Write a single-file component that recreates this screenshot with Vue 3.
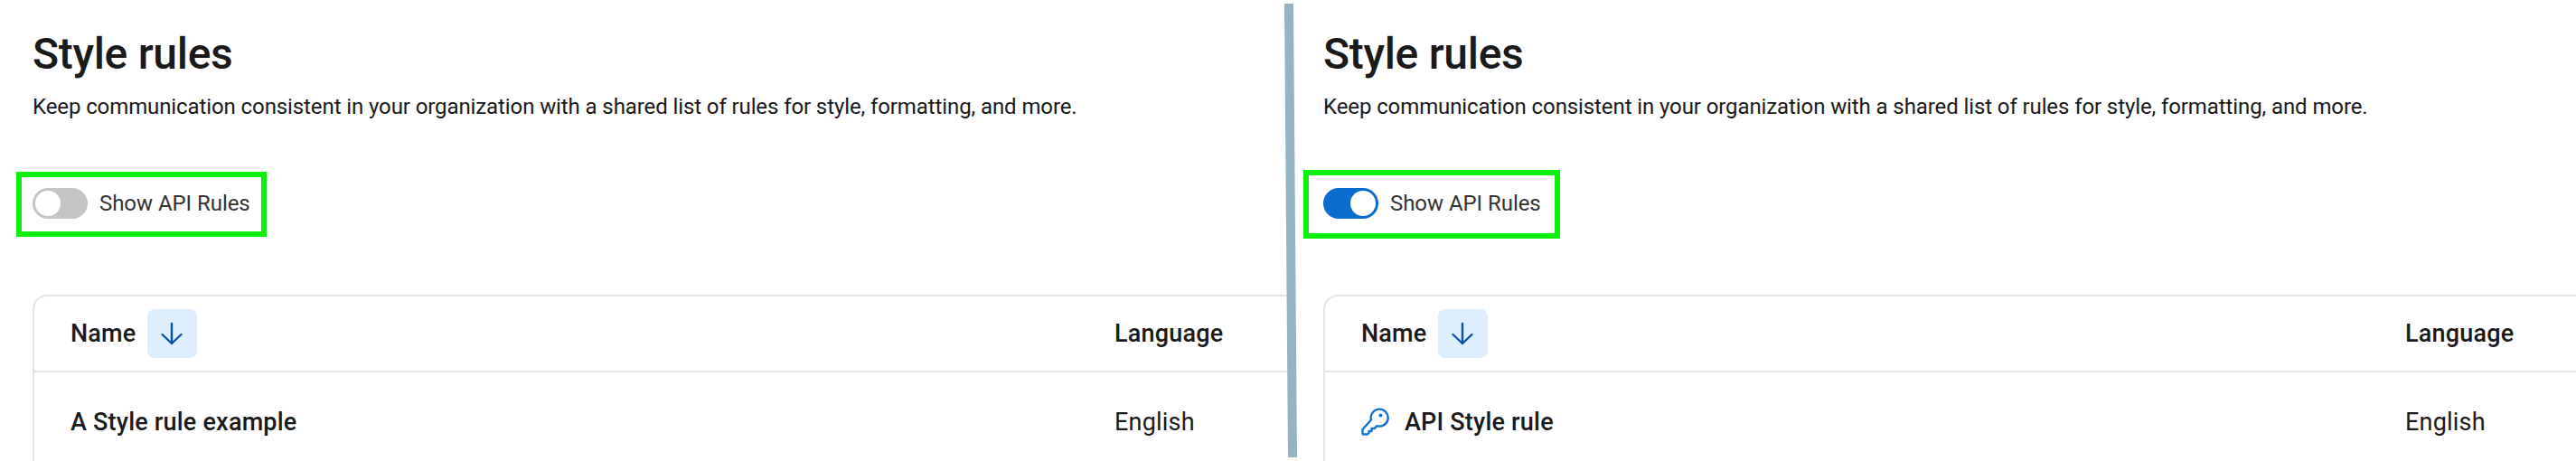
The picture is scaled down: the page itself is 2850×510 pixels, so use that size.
<script setup>
import { ref } from 'vue'

const panels = ref([
  { id: 'off', on: false, rowName: 'A Style rule example', api: false },
  { id: 'on', on: true, rowName: 'API Style rule', api: true }
])
</script>

<template>
  <div class="page">
    <section v-for="panel in panels" :key="panel.id" :class="['panel', 'panel-' + panel.id]">
      <h1 class="title">Style rules</h1>
      <p class="subtitle">Keep communication consistent in your organization with a shared list of rules for style, formatting, and more.</p>

      <div class="toggle-row">
        <button :class="['switch', { on: panel.on }]" @click="panel.on = !panel.on">
          <span class="thumb"></span>
        </button>
        <span class="toggle-label">Show API Rules</span>
        <span class="highlight"></span>
      </div>

      <div class="card">
        <div class="row head">
          <div class="cell name-cell">
            <span>Name</span>
            <span class="sort">
              <svg width="32" height="32" viewBox="0 0 32 32" fill="none" stroke="#0b4fa8" stroke-width="2.4" stroke-linecap="round" stroke-linejoin="round">
                <path d="M16 5v22" />
                <path d="M5.5 17 16 27 26.5 17" />
              </svg>
            </span>
          </div>
          <div class="cell">Language</div>
        </div>
        <div class="row body">
          <div class="cell name-cell">
            <svg v-if="panel.api" class="key" width="32" height="32" viewBox="0 0 32 32" fill="none" stroke="#1274d2" stroke-width="2.4" stroke-linejoin="round">
              <path d="M11 13.5A9.5 9.5 0 1 1 17.5 20.2L14.5 23H11.5V26H8.5V28L6.5 29.5H2.5A1 1 0 0 1 1.5 28.5V24Z" />
              <circle cx="21.5" cy="8.5" r="2" fill="#1274d2" stroke="none" />
            </svg>
            <span>{{ panel.rowName }}</span>
          </div>
          <div class="cell lang">English</div>
        </div>
      </div>
    </section>

    <svg class="divider" width="20" height="510" viewBox="0 0 20 510">
      <polygon points="1,4 11,4 15,506 5,506" fill="#95b3c3" />
    </svg>
  </div>
</template>

<style>
html, body {
  margin: 0;
  background: #fff;
  overflow: hidden;
}
</style>

<style scoped>
.page {
  position: relative;
  display: flex;
  width: 2850px;
  height: 510px;
  overflow: hidden;
  background: #fff;
  font-family: Roboto, "Liberation Sans", sans-serif;
  color: #1a1a1a;
}

.panel {
  box-sizing: border-box;
  height: 510px;
  padding: 30px 0 0 36px;
  overflow: hidden;
}

.panel-off {
  width: 1424px;
}

.panel-on {
  flex: 1;
  margin-left: 4px;
}

.title {
  margin: 0;
  font-size: 48px;
  line-height: 60px;
  font-weight: 500;
  letter-spacing: -0.3px;
}

.subtitle {
  margin: 12px 0 0;
  font-size: 24px;
  line-height: 32px;
  letter-spacing: -0.1px;
  white-space: nowrap;
}

.toggle-row {
  position: relative;
  display: flex;
  align-items: center;
  gap: 13px;
  width: max-content;
  margin-top: 74px;
}

.switch {
  position: relative;
  width: 61px;
  height: 34px;
  padding: 0;
  border: none;
  border-radius: 17px;
  background: #c4c4c4;
}

.switch.on {
  background: #0a6ccc;
}

.thumb {
  position: absolute;
  top: 3px;
  left: 3px;
  width: 28px;
  height: 28px;
  border-radius: 50%;
  background: #fff;
}

.switch.on .thumb {
  left: 30px;
}

.toggle-label {
  font-size: 24px;
  line-height: 34px;
  letter-spacing: -0.05px;
  color: #333;
}

.highlight {
  position: absolute;
  box-sizing: border-box;
  top: -18px;
  bottom: -20px;
  left: -18px;
  right: -18px;
  border: 6px solid #0cf00c;
  pointer-events: none;
}

.panel-on .highlight {
  top: -20px;
  bottom: -22px;
  left: -22px;
  right: -21px;
}

.card {
  width: 1500px;
  margin-top: 84px;
  border: 2px solid #e4e4e4;
  border-radius: 16px 0 0 0;
  border-right: none;
  border-bottom: none;
}

.row {
  display: grid;
  grid-template-columns: 1155px 1fr;
  padding-left: 40px;
  align-items: center;
  font-size: 27px;
  letter-spacing: 0.2px;
}

.head {
  height: 82px;
  border-bottom: 2px solid #e4e4e4;
  font-weight: 500;
}

.body {
  height: 110px;
  font-weight: 500;
}

.cell {
  display: flex;
  align-items: center;
}

.lang {
  font-weight: 400;
}

.name-cell {
  gap: 12px;
}

.sort {
  display: flex;
  align-items: center;
  justify-content: center;
  width: 55px;
  height: 54px;
  border-radius: 8px;
  background: #dfeeff;
}

.key {
  flex: none;
  margin-right: 4px;
}

.divider {
  position: absolute;
  top: 0;
  left: 1420px;
}
</style>
